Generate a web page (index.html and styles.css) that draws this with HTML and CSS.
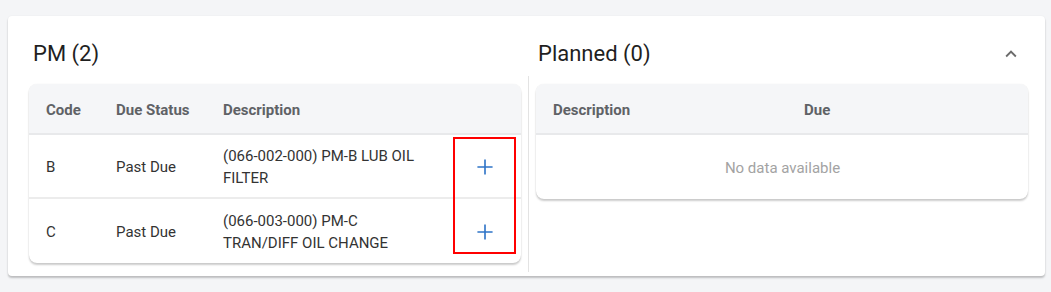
FILE: index.html
```html
<!DOCTYPE html>
<html lang="en">
<head>
    <meta charset="UTF-8">
    <meta name="viewport" content="width=device-width, initial-scale=1.0">
    <title>PM / Planned</title>
    <link rel="stylesheet" href="styles.css">
</head>
<body>
    <div class="page">
        <div class="card">
            <div class="card-head">
                <div class="title">PM (2)</div>
                <div class="spacer"></div>
                <div class="title title-right">
                    <span>Planned (0)</span>
                    <button class="collapse-btn" aria-label="Collapse">
                        <svg viewBox="0 0 24 24" width="22" height="22"><path d="M7.41,15.41L12,10.83L16.59,15.41L18,14L12,8L6,14L7.41,15.41Z"/></svg>
                    </button>
                </div>
            </div>
            <div class="card-body">
                <!-- PM list -->
                <div class="table-wrap">
                    <table class="data-table">
                        <colgroup>
                            <col class="c-code">
                            <col class="c-status">
                            <col class="c-desc">
                            <col class="c-action">
                        </colgroup>
                        <thead>
                            <tr>
                                <th>Code</th>
                                <th>Due Status</th>
                                <th>Description</th>
                                <th></th>
                            </tr>
                        </thead>
                        <tbody>
                            <tr>
                                <td>B</td>
                                <td>Past Due</td>
                                <td><div class="desc">(066-002-000) PM-B LUB OIL FILTER</div></td>
                                <td class="action">
                                    <svg class="plus" viewBox="0 0 24 24" width="26" height="26"><path d="M19,12.75H12.75V19H11.25V12.75H5V11.25H11.25V5H12.75V11.25H19V12.75Z"/></svg>
                                </td>
                            </tr>
                            <tr>
                                <td>C</td>
                                <td>Past Due</td>
                                <td><div class="desc">(066-003-000) PM-C TRAN/DIFF OIL CHANGE</div></td>
                                <td class="action">
                                    <svg class="plus" viewBox="0 0 24 24" width="26" height="26"><path d="M19,12.75H12.75V19H11.25V12.75H5V11.25H11.25V5H12.75V11.25H19V12.75Z"/></svg>
                                </td>
                            </tr>
                        </tbody>
                    </table>
                    <div class="highlight"></div>
                </div>

                <div class="divider"></div>

                <!-- Planned list -->
                <div class="table-wrap">
                    <table class="data-table">
                        <colgroup>
                            <col class="c-pdesc">
                            <col>
                        </colgroup>
                        <thead>
                            <tr>
                                <th>Description</th>
                                <th>Due</th>
                            </tr>
                        </thead>
                        <tbody>
                            <tr>
                                <td colspan="2" class="empty">No data available</td>
                            </tr>
                        </tbody>
                    </table>
                </div>
            </div>
        </div>
    </div>
</body>
</html>
```

FILE: styles.css
```css
body {
    margin: 0;
    background-color: #f4f5f7;
    font-family: Roboto, "Liberation Sans", Arial, sans-serif;
    color: rgba(0, 0, 0, 0.87);
}

.page {
    padding: 16px 6px 16px 8px;
}

.card {
    background-color: #fff;
    border-radius: 4px;
    box-shadow: 0 2px 2px rgba(0, 0, 0, 0.22), 0 0 2px rgba(0, 0, 0, 0.06);
    padding: 18px 17px 4px 21px;
    height: 260px;
    box-sizing: border-box;
}

.card-head {
    display: grid;
    grid-template-columns: 492px 15px 492px;
    height: 40px;
    margin-bottom: 2px;
}

.title {
    font-size: 22px;
    line-height: 40px;
    padding-left: 4px;
    color: #1f1f1f;
}

.title-right {
    display: flex;
    justify-content: space-between;
    align-items: center;
    padding-left: 2px;
}

.collapse-btn {
    border: none;
    background: none;
    padding: 0;
    margin-right: 6px;
    width: 22px;
    height: 22px;
    cursor: pointer;
}

.collapse-btn svg {
    display: block;
    fill: #6b6b6b;
}

.card-body {
    display: grid;
    grid-template-columns: 492px 15px 492px;
    align-items: start;
    height: 196px;
}

.divider {
    justify-self: center;
    width: 1px;
    height: 196px;
    background-color: #e3e3e3;
}

.table-wrap {
    position: relative;
    margin-top: 8px;
    background-color: #fff;
    border-radius: 8px;
    box-shadow: 0 2px 2px rgba(0, 0, 0, 0.2), 0 0 1px rgba(0, 0, 0, 0.12);
}

.data-table {
    width: 100%;
    border-collapse: collapse;
    table-layout: fixed;
    font-size: 15px;
}

.c-code { width: 70px; }
.c-status { width: 107px; }
.c-desc { width: 248px; }
.c-pdesc { width: 251px; }

.data-table th {
    background-color: #f5f6f8;
    color: #5f6266;
    font-weight: 700;
    text-align: left;
    height: 47px;
    padding: 2px 16px 0 17px;
    border-bottom: 2px solid #e8e9eb;
}

.data-table thead tr th:first-child {
    border-top-left-radius: 8px;
}

.data-table thead tr th:last-child {
    border-top-right-radius: 8px;
}

.data-table td {
    height: 60px;
    padding: 2px 16px 0 17px;
    color: #333;
    border-bottom: 2px solid #ececec;
}

.data-table tbody tr:last-child td {
    border-bottom: none;
    height: 62px;
}

.desc {
    width: 200px;
    line-height: 22px;
}

.action {
    text-align: center;
    padding: 2px 6px 0 0 !important;
}

.plus {
    display: block;
    margin: 0 auto;
    fill: #2f74c7;
}

.empty {
    text-align: center;
    color: #a3a3a3 !important;
}

/* annotation box over the action column */
.highlight {
    position: absolute;
    left: 424px;
    top: 53px;
    width: 59px;
    height: 113px;
    border: 2px solid #f00;
    pointer-events: none;
}
```
